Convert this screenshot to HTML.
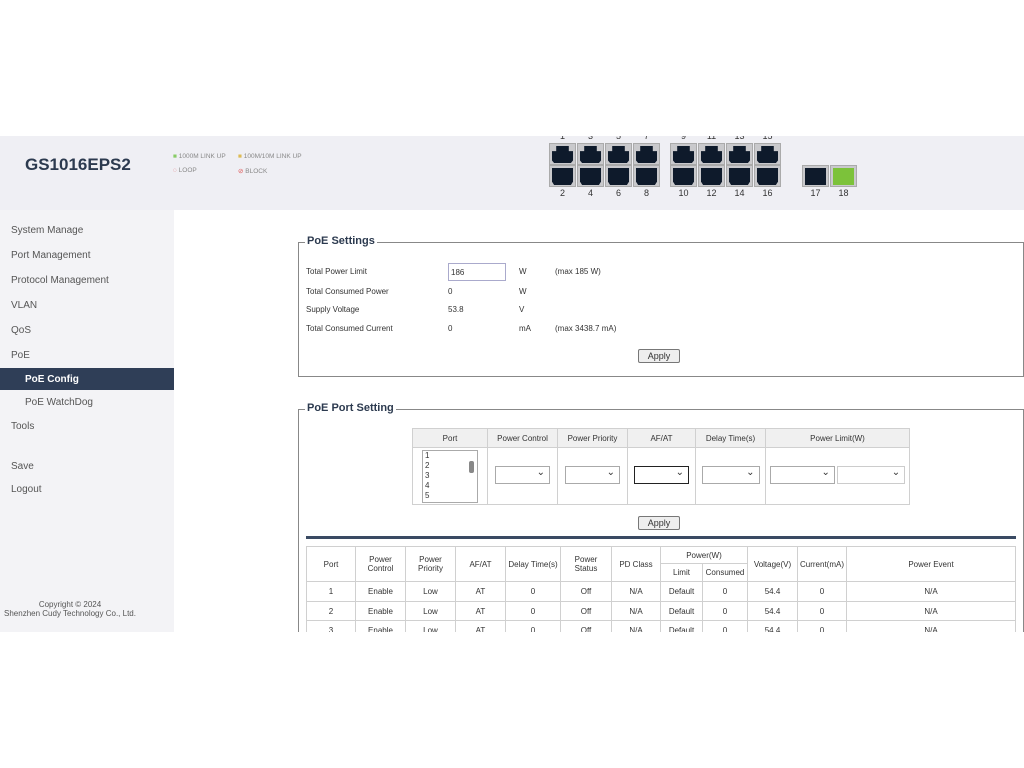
<!DOCTYPE html>
<html><head><style>
*{margin:0;padding:0;box-sizing:border-box}
body{width:1024px;height:768px;background:#fff;font-family:"Liberation Sans",Arial,sans-serif;position:relative;overflow:hidden;color:#333}
.a{position:absolute}
#hdr{left:0;top:136px;width:1024px;height:74px;background:#efeff4}
#side{left:0;top:210px;width:174px;height:422px;background:#f3f3f6}
.nav{position:absolute;left:11px;font-size:10px;color:#555}
.port{position:absolute;width:27px;height:22px;background:#c9c9cc;border:1px solid #aaa}
.port i{position:absolute;left:2px;top:2px;width:21px;height:17px;background:#0e1a2b;clip-path:polygon(0 30%,20% 30%,20% 0,80% 0,80% 30%,100% 30%,100% 85%,90% 100%,10% 100%,0 85%)}
.port.b i{clip-path:polygon(0 0,100% 0,100% 70%,80% 70%,80% 100%,20% 100%,20% 70%,0 70%)}
.port.b i{clip-path:polygon(0 0,100% 0,100% 80%,90% 100%,10% 100%,0 80%)}
.num{position:absolute;font-size:9px;color:#333;width:27px;text-align:center}
.s{font-size:8px;color:#333}
table{border-collapse:collapse;position:absolute}
td{border:1px solid #d0d0d0;text-align:center;font-size:8px;color:#333}
.sel{display:inline-block;width:55px;height:18px;border:1px solid #aaa;background:#fff;position:relative}
.sel:after{content:"⌄";position:absolute;right:4px;top:0px;font-size:10px}
.btn{position:absolute;width:42px;height:14px;border:1px solid #777;background:#eee;font-size:9px;text-align:center;line-height:12px;border-radius:2px}
.lg{position:absolute;font-size:6.5px;color:#888}
</style></head><body>
<div id="hdr" class="a"></div>
<div class="a" style="left:25px;top:155px;font-size:17px;font-weight:bold;color:#2c3a4f">GS1016EPS2</div>
<div class="lg" style="left:173px;top:153px"><span style="color:#8c6">■</span> 1000M LINK UP</div>
<div class="lg" style="left:238px;top:153px"><span style="color:#db5">■</span> 100M/10M LINK UP</div>
<div class="lg" style="left:173px;top:167px"><span style="color:#d55">◌</span> LOOP</div>
<div class="lg" style="left:238px;top:167px"><span style="color:#d55">⊘</span> BLOCK</div>
<div id="side" class="a"></div>
<div class="nav" style="top:225px">System Manage</div>
<div class="nav" style="top:250px">Port Management</div>
<div class="nav" style="top:275px">Protocol Management</div>
<div class="nav" style="top:300px">VLAN</div>
<div class="nav" style="top:325px">QoS</div>
<div class="nav" style="top:350px">PoE</div>
<div class="a" style="left:0;top:368px;width:174px;height:22px;background:#2f3e57"></div>
<div class="nav" style="top:374px;left:25px;color:#fff;font-weight:bold">PoE Config</div>
<div class="nav" style="top:397px;left:25px">PoE WatchDog</div>
<div class="nav" style="top:421px">Tools</div>
<div class="nav" style="top:461px">Save</div>
<div class="nav" style="top:484px">Logout</div>
<div class="a" style="left:0;top:600px;width:140px;text-align:center;font-size:8px;color:#555;line-height:9px">Copyright © 2024<br>Shenzhen Cudy Technology Co., Ltd.</div>

<div class="a" style="left:298px;top:242px;width:726px;height:135px;border:1px solid #888"></div>
<div class="a" style="left:305px;top:235px;background:#fff;padding:0 2px;font-size:11px;font-weight:bold;color:#2c3a4f">PoE Settings</div>
<div class="a s" style="left:306px;top:267px">Total Power Limit</div>
<div class="a" style="left:448px;top:263px;width:58px;height:18px;border:1px solid #aac;font-size:8px;padding:4px 2px">186</div>
<div class="a s" style="left:519px;top:267px">W</div><div class="a s" style="left:555px;top:267px">(max 185 W)</div>
<div class="a s" style="left:306px;top:287px">Total Consumed Power</div><div class="a s" style="left:448px;top:287px">0</div><div class="a s" style="left:519px;top:287px">W</div>
<div class="a s" style="left:306px;top:305px">Supply Voltage</div><div class="a s" style="left:448px;top:305px">53.8</div><div class="a s" style="left:519px;top:305px">V</div>
<div class="a s" style="left:306px;top:324px">Total Consumed Current</div><div class="a s" style="left:448px;top:324px">0</div><div class="a s" style="left:519px;top:324px">mA</div><div class="a s" style="left:555px;top:324px">(max 3438.7 mA)</div>
<div class="btn" style="left:638px;top:349px">Apply</div>

<div class="a" style="left:298px;top:409px;width:726px;height:240px;border:1px solid #888"></div>
<div class="a" style="left:305px;top:402px;background:#fff;padding:0 2px;font-size:11px;font-weight:bold;color:#2c3a4f">PoE Port Setting</div>
<table style="left:412px;top:428px;width:498px">
<tr style="height:19px;background:#f0f0f0"><td style="width:75px">Port</td><td style="width:70px">Power Control</td><td style="width:70px">Power Priority</td><td style="width:68px">AF/AT</td><td style="width:70px">Delay Time(s)</td><td>Power Limit(W)</td></tr>
<tr style="height:57px"><td><div style="margin:auto;width:56px;height:53px;border:1px solid #aaa;text-align:left;font-size:8px;line-height:10px;padding-left:2px;overflow:hidden;position:relative">1<br>2<br>3<br>4<br>5<br>6<div style="position:absolute;right:3px;top:10px;width:5px;height:12px;background:#888;border-radius:2px"></div></div></td>
<td><span class="sel"></span></td><td><span class="sel"></span></td><td><span class="sel" style="border:1px solid #222"></span></td><td><span class="sel" style="width:58px"></span></td><td><span class="sel" style="width:65px"></span> <span class="sel" style="width:68px;border-color:#ccc"></span></td></tr>
</table>
<div class="btn" style="left:638px;top:516px">Apply</div>
<div class="a" style="left:306px;top:536px;width:710px;height:3px;background:#3a4a63"></div>
<table style="left:306px;top:546px;width:710px">
<tr style="height:17px"><td rowspan="2" style="width:49px">Port</td><td rowspan="2" style="width:50px">Power<br>Control</td><td rowspan="2" style="width:50px">Power<br>Priority</td><td rowspan="2" style="width:50px">AF/AT</td><td rowspan="2" style="width:55px">Delay Time(s)</td><td rowspan="2" style="width:51px">Power<br>Status</td><td rowspan="2" style="width:49px">PD Class</td><td colspan="2">Power(W)</td><td rowspan="2" style="width:50px">Voltage(V)</td><td rowspan="2" style="width:49px">Current(mA)</td><td rowspan="2">Power Event</td></tr>
<tr style="height:18px"><td style="width:42px">Limit</td><td style="width:45px">Consumed</td></tr>
<tr style="height:20px"><td>1</td><td>Enable</td><td>Low</td><td>AT</td><td>0</td><td>Off</td><td>N/A</td><td>Default</td><td>0</td><td>54.4</td><td>0</td><td>N/A</td></tr>
<tr style="height:19px"><td>2</td><td>Enable</td><td>Low</td><td>AT</td><td>0</td><td>Off</td><td>N/A</td><td>Default</td><td>0</td><td>54.4</td><td>0</td><td>N/A</td></tr>
<tr style="height:19px"><td>3</td><td>Enable</td><td>Low</td><td>AT</td><td>0</td><td>Off</td><td>N/A</td><td>Default</td><td>0</td><td>54.4</td><td>0</td><td>N/A</td></tr>
</table>
<div class="num" style="left:549px;top:131px">1</div><div class="num" style="left:577px;top:131px">3</div><div class="num" style="left:605px;top:131px">5</div><div class="num" style="left:633px;top:131px">7</div>
<div class="num" style="left:670px;top:131px">9</div><div class="num" style="left:698px;top:131px">11</div><div class="num" style="left:726px;top:131px">13</div><div class="num" style="left:754px;top:131px">15</div>
<div class="a" style="left:0;top:632px;width:1024px;height:136px;background:#fff"></div>
<div class="a" style="left:0;top:0;width:1024px;height:136px;background:#fff"></div>

<div class="port" style="left:549px;top:143px"><i></i></div><div class="port b" style="left:549px;top:165px"><i></i></div>
<div class="port" style="left:577px;top:143px"><i></i></div><div class="port b" style="left:577px;top:165px"><i></i></div>
<div class="port" style="left:605px;top:143px"><i></i></div><div class="port b" style="left:605px;top:165px"><i></i></div>
<div class="port" style="left:633px;top:143px"><i></i></div><div class="port b" style="left:633px;top:165px"><i></i></div>
<div class="port" style="left:670px;top:143px"><i></i></div><div class="port b" style="left:670px;top:165px"><i></i></div>
<div class="port" style="left:698px;top:143px"><i></i></div><div class="port b" style="left:698px;top:165px"><i></i></div>
<div class="port" style="left:726px;top:143px"><i></i></div><div class="port b" style="left:726px;top:165px"><i></i></div>
<div class="port" style="left:754px;top:143px"><i></i></div><div class="port b" style="left:754px;top:165px"><i></i></div>
<div class="port" style="left:802px;top:165px"><i style="clip-path:none"></i></div>
<div class="port" style="left:830px;top:165px"><i style="background:#7cc23a;clip-path:none"></i></div>
<div class="num" style="left:549px;top:188px">2</div><div class="num" style="left:577px;top:188px">4</div><div class="num" style="left:605px;top:188px">6</div><div class="num" style="left:633px;top:188px">8</div>
<div class="num" style="left:670px;top:188px">10</div><div class="num" style="left:698px;top:188px">12</div><div class="num" style="left:726px;top:188px">14</div><div class="num" style="left:754px;top:188px">16</div>
<div class="num" style="left:802px;top:188px">17</div><div class="num" style="left:830px;top:188px">18</div>
</body></html>
